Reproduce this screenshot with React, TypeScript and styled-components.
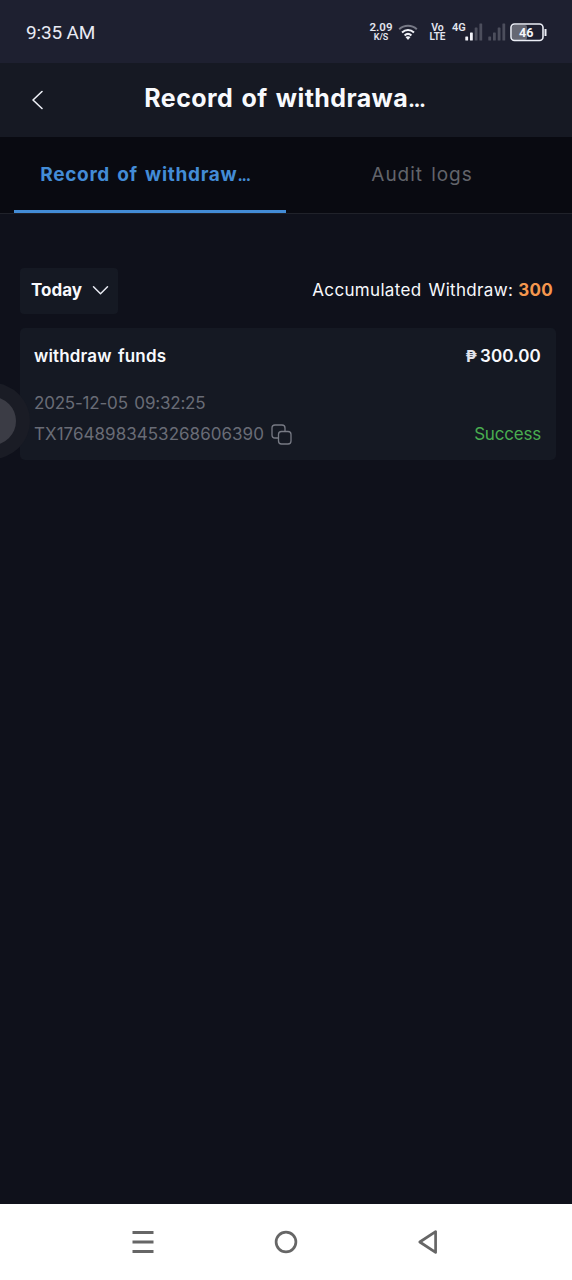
import React from 'react';
import styled, { createGlobalStyle } from 'styled-components';

const Global = createGlobalStyle`
  * { box-sizing: border-box; }
  body { margin: 0; background: #0f111b; }
`;

const Screen = styled.div`
  position: relative;
  width: 572px;
  height: 1280px;
  display: flex;
  flex-direction: column;
  overflow: hidden;
  background: #0f111b;
  color: #f8f9fd;
  font-family: Inter, 'Liberation Sans', sans-serif;
`;

const Text = styled.span<{ $size: number; $weight?: number; $color?: string; $track?: number; $word?: number }>`
  font-size: ${p => p.$size}px;
  font-weight: ${p => p.$weight ?? 400};
  color: ${p => p.$color ?? '#f8f9fd'};
  letter-spacing: ${p => p.$track ?? 0}px;
  word-spacing: ${p => p.$word ?? 0}px;
  line-height: 1.2;
  white-space: nowrap;
`;

const Dots = styled.span<{ $track: number }>`
  letter-spacing: ${p => p.$track}px;
  font-size: 0.84em;
`;

const StatusBar = styled.div`
  height: 63px;
  flex: none;
  display: flex;
  align-items: center;
  justify-content: space-between;
  padding: 1px 25px 0 26px;
  background: #1e2030;
  font-family: Roboto, sans-serif;
`;

const Clock = styled.span`
  font-size: 19px;
  letter-spacing: -0.15px;
  color: #e9ebf4;
`;

const StatusIcons = styled.div`
  display: flex;
  align-items: center;
  height: 24px;
`;

const Stack = styled.div<{ $width: number; $gap: number }>`
  width: ${p => p.$width}px;
  margin-right: ${p => p.$gap}px;
  display: flex;
  flex-direction: column;
  align-items: center;
  color: #e4e6ef;
  font-weight: 600;
`;

const Line = styled.span<{ $size: number; $height?: number }>`
  font-size: ${p => p.$size}px;
  line-height: ${p => p.$height ?? 9.5}px;
`;

const Header = styled.header`
  height: 74px;
  flex: none;
  display: grid;
  grid-template-columns: 76px 1fr 76px;
  align-items: center;
  background: #161923;
`;

const BackButton = styled.div`
  padding: 0 0 0 31px;
  display: flex;
`;

const Title = styled.div`
  text-align: center;
  padding: 0 3px 4px 0;
`;

const Tabs = styled.nav`
  height: 77px;
  flex: none;
  display: flex;
  padding: 0 14px;
  background: #090a11;
  border-bottom: 1px solid #20222a;
`;

const Tab = styled.div<{ $active?: boolean }>`
  width: 272px;
  height: 76px;
  display: flex;
  justify-content: center;
  padding: 27px 0 0;
  padding-right: ${p => (p.$active ? 10 : 0)}px;
  border-bottom: ${p => (p.$active ? '3px solid #438cd6' : 'none')};
`;

const Content = styled.main`
  flex: 1;
  padding: 54px 16px 0 20px;
`;

const FilterRow = styled.div`
  display: flex;
  align-items: center;
  justify-content: space-between;
  height: 46px;
  padding-right: 3px;
`;

const Select = styled.div`
  width: 98px;
  height: 46px;
  padding: 0 9px 2px 11px;
  display: flex;
  align-items: center;
  justify-content: space-between;
  border-radius: 4px;
  background: #151923;
`;

const Total = styled.div`
  display: flex;
  gap: 5px;
  padding-bottom: 2px;
`;

const Card = styled.section`
  height: 132px;
  margin-top: 14px;
  padding: 18px 15px 0 14px;
  border-radius: 5px;
  background: #151923;
`;

const Row = styled.div<{ $top?: number }>`
  display: flex;
  align-items: center;
  justify-content: space-between;
  height: 21px;
  margin-top: ${p => p.$top ?? 0}px;
`;

const Group = styled.div<{ $gap: number }>`
  display: flex;
  align-items: center;
  gap: ${p => p.$gap}px;
`;

const AssistBubble = styled.div`
  position: absolute;
  left: -46px;
  top: 383px;
  width: 76px;
  height: 76px;
  border-radius: 50%;
  background: #1a1c25;
  display: flex;
  align-items: center;
  justify-content: center;
  &::after {
    content: '';
    width: 48px;
    height: 48px;
    border-radius: 50%;
    background: #3b3c45;
  }
`;

const NavBar = styled.footer`
  height: 76px;
  flex: none;
  display: flex;
  justify-content: center;
  align-items: center;
  gap: 119px;
  background: #fff;
`;

const WifiIcon = () => (
  <svg width="20" height="17" viewBox="0 0 20 17" fill="none" strokeLinecap="butt">
    <path d="M1.2 5.2C6.2.6 13.8.6 18.8 5.2" stroke="#777986" strokeWidth="2" />
    <path d="M4 8.4c3.5-3.1 8.5-3.1 12 0" stroke="#f1f2f8" strokeWidth="2" />
    <path d="M6.6 11.4c2-1.8 4.8-1.8 6.8 0" stroke="#f1f2f8" strokeWidth="2" />
    <path d="M7.5 13.1c1.5-1.1 3.5-1.1 5 0L10 16z" fill="#f1f2f8" />
  </svg>
);

const Bars = ({ lit }: { lit: number }) => (
  <svg width="18" height="18" viewBox="0 0 18 18">
    {[4, 8, 13, 17].map((h, i) => (
      <rect key={h} x={i * 4.7 + 0.3} y={17.5 - h} width="2.8" height={h} rx=".6" fill={i < lit ? '#f1f2f8' : '#4c4e5c'} />
    ))}
  </svg>
);

const Battery = () => (
  <svg width="37" height="19" viewBox="0 0 37 19">
    <rect x="2" y="2" width="15" height="15" rx="2" fill="#656773" />
    <rect x="1" y="1" width="32" height="16.5" rx="3.5" fill="none" stroke="#eceef6" strokeWidth="1.6" />
    <path d="M35.5 6v7" stroke="#eceef6" strokeWidth="2" />
    <text x="16.2" y="13.8" textAnchor="middle" fontFamily="Roboto" fontSize="12.5" fontWeight="700" fill="#f4f5fa">46</text>
  </svg>
);

const Network = styled.span`
  align-self: flex-start;
  width: 14px;
  margin-right: -1px;
  font-size: 11px;
  line-height: 15px;
  font-weight: 600;
  color: #e4e6ef;
`;

const Spacer = styled.span<{ $w: number }>`
  width: ${p => p.$w}px;
`;

export default function App() {
  return (
    <Screen>
      <Global />
      <StatusBar>
        <Clock>9:35 AM</Clock>
        <StatusIcons>
          <Stack $width={22} $gap={6}>
            <Line $size={11.5} $height={11}>2.09</Line>
            <Line $size={9}>K/S</Line>
          </Stack>
          <WifiIcon />
          <Spacer $w={11} />
          <Stack $width={17} $gap={6}>
            <Line $size={10.5}>Vo</Line>
            <Line $size={10}>LTE</Line>
          </Stack>
          <Network>4G</Network>
          <Bars lit={2} />
          <Spacer $w={5} />
          <Bars lit={0} />
          <Spacer $w={4} />
          <Battery />
        </StatusIcons>
      </StatusBar>
      <Header>
        <BackButton>
          <svg width="13" height="20" viewBox="0 0 13 20" fill="none" stroke="#eef0f7" strokeWidth="1.6" strokeLinecap="round" strokeLinejoin="round">
            <path d="M11 1.5 2 10l9 8.5" />
          </svg>
        </BackButton>
        <Title>
          <Text $size={25} $weight={700} $word={2} $track={0.4}>
            Record of withdrawa<Dots $track={-1.5}>...</Dots>
          </Text>
        </Title>
        <span />
      </Header>
      <Tabs>
        <Tab $active>
          <Text $size={19} $weight={700} $color="#438cd6" $word={2} $track={0.7}>
            Record of withdraw<Dots $track={-1.2}>...</Dots>
          </Text>
        </Tab>
        <Tab>
          <Text $size={19} $color="#62646b" $word={2} $track={0.95}>Audit logs</Text>
        </Tab>
      </Tabs>
      <Content>
        <FilterRow>
          <Select>
            <Text $size={17} $weight={700}>Today</Text>
            <svg width="17" height="11" viewBox="0 0 17 11" fill="none" stroke="#e8eaf2" strokeWidth="1.5" strokeLinecap="round" strokeLinejoin="round">
              <path d="m1.5 1.8 7 7 7-7" />
            </svg>
          </Select>
          <Total>
            <Text $size={17} $word={2} $track={0.33}>Accumulated Withdraw:</Text>
            <Text $size={17} $weight={700} $color="#f5974e" $track={0.3}>300</Text>
          </Total>
        </FilterRow>
        <Card>
          <Row>
            <Text $size={17} $weight={600} $word={2} $track={0.15}>withdraw funds</Text>
            <Group $gap={3}>
              <Text $size={16} $weight={700} $color="#e0e2ea">₱</Text>
              <Text $size={17} $weight={600} $track={0.15}>300.00</Text>
            </Group>
          </Row>
          <Row $top={26}>
            <Text $size={17} $color="#696c76" $word={2} $track={-0.2}>2025-12-05 09:32:25</Text>
          </Row>
          <Row $top={10}>
            <Group $gap={7}>
              <Text $size={17} $color="#696c76" $track={0.03}>TX17648983453268606390</Text>
              <svg width="21" height="21" viewBox="0 0 21 21" fill="none" stroke="#777a84" strokeWidth="1.3">
                <path d="M7.5 14H4a3 3 0 0 1-3-3V4a3 3 0 0 1 3-3h7a3 3 0 0 1 3 3v3.5" />
                <rect x="7.5" y="7.5" width="12.5" height="12.5" rx="3" />
              </svg>
            </Group>
            <Text $size={17} $color="#49ad50" $track={-0.2}>Success</Text>
          </Row>
        </Card>
      </Content>
      <AssistBubble />
      <NavBar>
        <svg width="24" height="24" viewBox="0 0 24 24" stroke="#666" strokeWidth="2.8">
          <path d="M1.5 2.5h21M1.5 12h21M1.5 21.5h21" />
        </svg>
        <svg width="24" height="24" viewBox="0 0 24 24" fill="none" stroke="#666" strokeWidth="2.7">
          <circle cx="12" cy="12" r="9.9" />
        </svg>
        <svg width="24" height="24" viewBox="0 0 24 24" fill="none" stroke="#666" strokeWidth="2.7" strokeLinejoin="round">
          <path d="M18.6 1.6v20.8L2.8 12z" />
        </svg>
      </NavBar>
    </Screen>
  );
}
